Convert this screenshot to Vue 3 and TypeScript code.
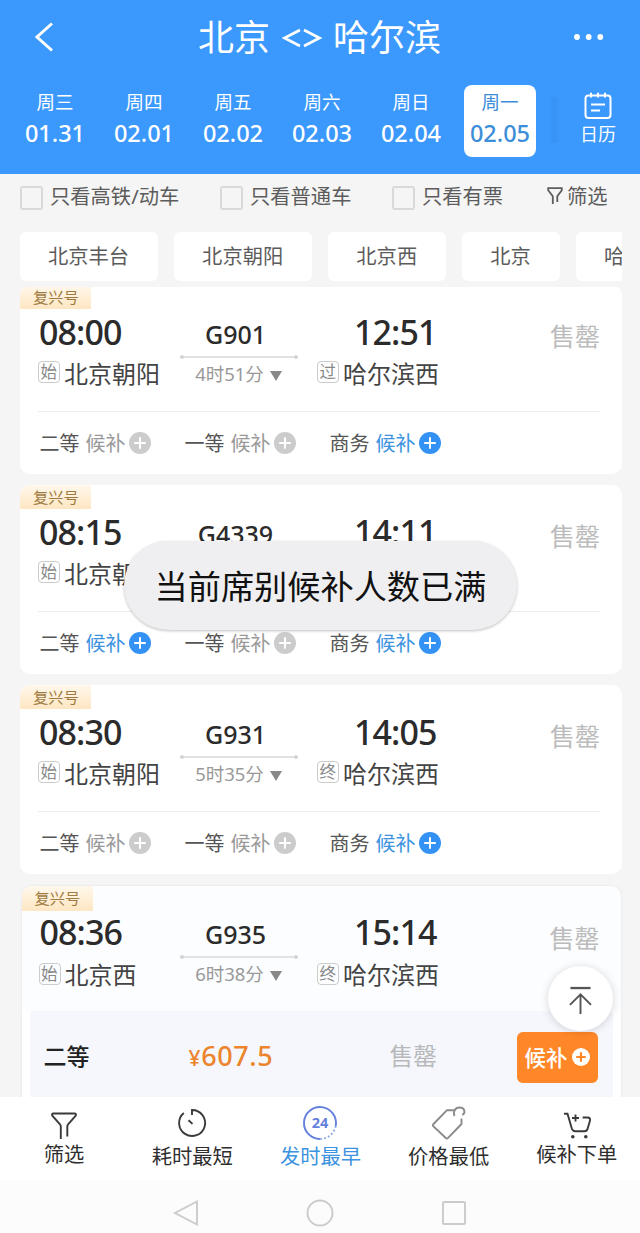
<script setup lang="ts">
interface Seat {
  name: string
  open: boolean
}
interface Train {
  no: string
  depart: string
  arrive: string
  from: string
  to: string
  toKind: string
  duration: string
  seats: Seat[]
  expanded?: boolean
}

const days = [
  { week: '周三', date: '01.31' },
  { week: '周四', date: '02.01' },
  { week: '周五', date: '02.02' },
  { week: '周六', date: '02.03' },
  { week: '周日', date: '02.04' },
  { week: '周一', date: '02.05', active: true },
]

const stations = ['北京丰台', '北京朝阳', '北京西', '北京', '哈尔滨']

const seats = (second: boolean): Seat[] => [
  { name: '二等', open: second },
  { name: '一等', open: false },
  { name: '商务', open: true },
]

const trains: Train[] = [
  { no: 'G901', depart: '08:00', arrive: '12:51', from: '北京朝阳', to: '哈尔滨西', toKind: '过', duration: '4时51分', seats: seats(false) },
  { no: 'G4339', depart: '08:15', arrive: '14:11', from: '北京朝阳', to: '哈尔滨西', toKind: '终', duration: '5时56分', seats: seats(true) },
  { no: 'G931', depart: '08:30', arrive: '14:05', from: '北京朝阳', to: '哈尔滨西', toKind: '终', duration: '5时35分', seats: seats(false) },
  { no: 'G935', depart: '08:36', arrive: '15:14', from: '北京西', to: '哈尔滨西', toKind: '终', duration: '6时38分', seats: [], expanded: true },
]
</script>

<template>
  <div class="screen">
    <header class="header">
      <div class="titlebar">
        <svg class="back" viewBox="0 0 20 30"><path d="M18 1.5 3 15l15 13.5" /></svg>
        <h1 class="title"><span>北京</span><svg class="swap" viewBox="0 0 40 18"><path d="M18 1 2.500 9l15.500 8M22 1l15.500 8L22 17" /></svg><span>哈尔滨</span></h1>
        <svg class="more" viewBox="0 0 30 6"><circle cx="3" cy="3" r="2.900" /><circle cx="14.700" cy="3" r="2.900" /><circle cx="26.300" cy="3" r="2.900" /></svg>
      </div>
      <div class="dates">
        <div v-for="d in days" :key="d.date" class="day" :class="{ active: d.active }">
          <span class="week">{{ d.week }}</span>
          <span class="date">{{ d.date }}</span>
        </div>
        <div class="date-edge"></div>
        <div class="calendar">
          <svg viewBox="0 0 28 28">
            <rect x="1.500" y="3.500" width="25" height="22.500" rx="3" />
            <path d="M7 .8v4.700M14 .8v4.700M21 .8v4.700M7 12.500h14M7 18.500h9" />
          </svg>
          <span>日历</span>
        </div>
      </div>
    </header>

    <main class="content">
      <div class="filters">
        <label class="check first"><i></i>只看高铁/动车</label>
        <label class="check second"><i></i>只看普通车</label>
        <label class="check third"><i></i>只看有票</label>
        <div class="filter">
          <svg viewBox="0 0 16 18"><path d="M5.800 17V9.200L1.200 3.200V1.200h13.600v2l-4.500 6V15" /></svg>
          <span>筛选</span>
        </div>
      </div>

      <div class="chips">
        <span v-for="s in stations" :key="s" class="chip">{{ s }}</span>
      </div>

      <div class="list">
        <article v-for="t in trains" :key="t.no" class="card" :class="{ expanded: t.expanded }">
          <span class="badge">复兴号</span>
          <div class="trip">
            <div class="stop dep">
              <div class="time">{{ t.depart }}</div>
              <div class="place"><i>始</i>{{ t.from }}</div>
            </div>
            <div class="mid">
              <div class="no">{{ t.no }}</div>
              <div class="track"></div>
              <div class="duration">
                <span>{{ t.duration }}</span>
                <svg viewBox="0 0 12 10"><path d="M0 0h12L6 10z" /></svg>
              </div>
            </div>
            <div class="stop arr">
              <div class="time">{{ t.arrive }}</div>
              <div class="place"><i>{{ t.toKind }}</i>{{ t.to }}</div>
            </div>
            <div class="soldout">售罄</div>
          </div>

          <div v-if="!t.expanded" class="seats">
            <div v-for="s in t.seats" :key="s.name" class="seat" :class="{ open: s.open }">
              <span>{{ s.name }}</span>
              <em>候补</em>
              <svg viewBox="0 0 22 22"><circle cx="11" cy="11" r="11" /><path d="M11 5.200v11.600M5.200 11h11.600" /></svg>
            </div>
          </div>
          <div v-else class="panel">
            <span class="class-name">二等</span>
            <span class="price"><small>¥</small>607.5</span>
            <span class="none">售罄</span>
            <button class="wait">
              候补<svg viewBox="0 0 18 18"><circle cx="9" cy="9" r="9" /><path d="M9 4.200v9.600M4.200 9h9.600" /></svg>
            </button>
          </div>
        </article>
      </div>
    </main>

    <nav class="tabs">
      <div class="tab high">
        <svg viewBox="0 0 34 34"><path d="M13.800 33V20.500c0-1-.3-1.500-1-2.300L5.500 10c-1-1.200-.5-2.500 1-2.500h21c1.500 0 2 1.300 1 2.500l-7.200 8.200c-.7.800-1 1.300-1 2.300V30.500" /></svg>
        <span>筛选</span>
      </div>
      <div class="tab">
        <svg viewBox="0 0 34 34"><path d="M17 9V4a13 13 0 1 1-8.200 3M13.500 14.300l4 3.600" /></svg>
        <span>耗时最短</span>
      </div>
      <div class="tab current">
        <svg viewBox="0 0 34 34">
          <path class="c1" d="M17 33A16 16 0 1 1 32.700 20" />
          <path class="c2" d="M32.700 20A16 16 0 0 1 17 33" stroke-dasharray="1.800 2.200" />
          <text x="17" y="22.300" text-anchor="middle">24</text>
        </svg>
        <span>发时最早</span>
      </div>
      <div class="tab tag">
        <svg viewBox="0 0 34 34"><path d="M23 4.200H15L1.500 18c-.8.800-.8 1.500 0 2.300l12 11.500c1 .9 1.700.9 2.600 0L29.500 18v-5.500M22.500 10c-1.800-4 .5-8.500 5-8.500 5.500 0 6.300 5.500 2.800 7.300" /></svg>
        <span>价格最低</span>
      </div>
      <div class="tab high">
        <svg viewBox="0 0 34 34"><path d="M4 7.800h3.500l4.300 14.700c.7 2 1.600 2.700 3.500 2.700h9.200c1.800 0 2.600-.8 3.100-2.500l2.300-7.700c.7-2.300-.3-3.500-2.300-3.500h-5M15.500 8.500v7M12 12h7" /><circle cx="12.800" cy="30.800" r="1.800" /><circle cx="25.800" cy="30.800" r="1.800" /></svg>
        <span>候补下单</span>
      </div>
    </nav>

    <div class="sysnav">
      <svg viewBox="0 0 28 28"><path d="M24 2.500v23L2 14z" /></svg>
      <svg viewBox="0 0 28 28"><circle cx="14" cy="14" r="12.500" /></svg>
      <svg viewBox="0 0 28 28"><rect x="3" y="3" width="22" height="22" rx="1" /></svg>
    </div>

    <button class="totop">
      <svg viewBox="0 0 24 30"><path d="M1.500 2h21" stroke-width="2.400" /><path d="M12 29V8.500M1 19.500l11-11 11 11" /></svg>
    </button>
    <div class="toast">当前席别候补人数已满</div>
  </div>
</template>

<style>
body {
  margin: 0;
  overflow: hidden;
}
</style>

<style scoped>
.screen {
  position: relative;
  display: flex;
  flex-direction: column;
  width: 640px;
  height: 1233px;
  overflow: hidden;
  background: #f5f5f5;
  color: #333;
  font-family: 'Noto Sans', 'Noto Sans CJK SC', sans-serif;
  white-space: nowrap;
}
* {
  box-sizing: border-box;
}
svg {
  flex: none;
  fill: none;
  overflow: visible;
}
i,
em {
  font-style: normal;
}
button {
  border: 0;
  padding: 0;
  font-family: inherit;
}

.header {
  flex: none;
  height: 174px;
  background: #3b98fc;
  color: #fff;
}
.titlebar {
  display: flex;
  align-items: center;
  height: 74px;
  padding: 0 36px 0 34px;
}
.back {
  width: 20px;
  height: 30px;
  stroke: #fff;
  stroke-width: 3;
}
.title {
  display: flex;
  align-items: center;
  flex: 1;
  margin: 0 0 0 144px;
  font-size: 36px;
  font-weight: 400;
  line-height: 75px;
}
.swap {
  width: 40px;
  height: 18px;
  margin: 1px 11px 0 12px;
  stroke: #fff;
  stroke-width: 2.700;
}
.more {
  width: 30px;
  height: 6px;
  fill: #fff;
}
.dates {
  display: flex;
  padding: 11px 0 0 19px;
}
.day {
  display: flex;
  flex-direction: column;
  align-items: center;
  width: 72px;
  height: 72px;
  margin-right: 17px;
  border-radius: 8px;
}
.day.active {
  background: #fff;
  color: #3c8ed8;
}
.week {
  margin-top: 5px;
  font-size: 18.500px;
  line-height: 24px;
}
.date {
  margin-top: 6px;
  font-size: 23.500px;
  font-weight: 500;
  line-height: 27px;
}
.date-edge {
  width: 10px;
  height: 46px;
  margin: 12px 24px 0 -4px;
  background: linear-gradient(90deg, rgba(30, 110, 210, 0), rgba(30, 110, 210, 0.14), rgba(30, 110, 210, 0));
}
.calendar {
  display: flex;
  flex-direction: column;
  align-items: center;
  width: 40px;
  margin-left: -5px;
  padding-top: 7px;
  font-size: 18px;
  line-height: 24px;
}
.calendar svg {
  width: 28px;
  height: 28px;
  margin-bottom: 2px;
  stroke: #fff;
  stroke-width: 2;
}

.content {
  flex: 1;
  min-height: 0;
  overflow: hidden;
}
.filters {
  display: flex;
  height: 58px;
  padding: 8px 0 0 20px;
  font-size: 20.300px;
  line-height: 28px;
  color: #5c5c5c;
}
.check {
  display: flex;
}
.check i {
  width: 23px;
  height: 24px;
  margin: 4px 7px 0 0;
  border: 2px solid #d9d9d9;
  border-radius: 3px;
}
.check.first {
  width: 200px;
}
.check.second {
  width: 172px;
}
.check.third {
  width: 155px;
}
.filter {
  display: flex;
}
.filter svg {
  width: 16px;
  height: 18px;
  margin: 5px 4px 0 0;
  stroke: #5c5c5c;
  stroke-width: 1.800;
}
.chips {
  display: flex;
  gap: 16.500px;
  width: 602px;
  height: 49px;
  margin-left: 20px;
  overflow: hidden;
}
.chip {
  flex: none;
  padding: 0 28.700px 0 27.900px;
  border-radius: 6px;
  background: #fff;
  font-size: 20.300px;
  line-height: 48px;
  color: #5c5c5c;
}

.list {
  display: flex;
  flex-direction: column;
  gap: 11px;
  height: 816px;
  margin-top: 6px;
  overflow: hidden;
}
.card {
  flex: none;
  display: flex;
  flex-direction: column;
  width: 602px;
  height: 189px;
  margin-left: 20px;
  border-radius: 10px;
  background: #fff;
  overflow: hidden;
}
.card:first-child {
  margin-top: -2px;
}
.badge {
  flex: none;
  align-self: flex-start;
  width: 71px;
  height: 24px;
  padding-left: 13px;
  background: linear-gradient(#fff8ec, #fee6c2);
  font-size: 15.300px;
  line-height: 24px;
  color: #a07c42;
}
.trip {
  display: flex;
  flex: none;
  height: 102px;
  padding: 2px 22px 0 18px;
}
.stop {
  width: 142px;
}
.arr {
  margin-left: 19px;
}
.time {
  height: 40px;
  padding-left: 1px;
  font-size: 34px;
  font-weight: 500;
  line-height: 42px;
  letter-spacing: -0.900px;
  color: #2b2b2b;
}
.arr .time {
  padding-left: 37px;
}
.place {
  display: flex;
  align-items: center;
  height: 42px;
  font-size: 24px;
  color: #444;
}
.place i {
  width: 22px;
  height: 22px;
  margin-right: 4px;
  border: 1.500px solid #ccc;
  border-radius: 4px;
  font-size: 16.500px;
  line-height: 20px;
  text-align: center;
  text-indent: -0.500px;
  color: #888;
}
.mid {
  width: 118px;
}
.no {
  margin-right: 7px;
  padding-top: 6px;
  font-size: 25px;
  font-weight: 500;
  line-height: 34px;
  text-align: center;
  color: #2b2b2b;
}
.track {
  display: flex;
  align-items: center;
  justify-content: space-between;
  height: 1.500px;
  margin: 5px 0 4.500px;
  background: #e2e2e2;
}
.track::before,
.track::after {
  content: '';
  width: 4px;
  height: 4px;
  border-radius: 2px;
  background: #d4d4d4;
}
.duration {
  display: flex;
  align-items: center;
  justify-content: center;
  gap: 6px;
  margin-right: 1px;
  font-size: 18.500px;
  line-height: 24px;
  color: #999;
}
.duration svg {
  width: 12px;
  height: 10px;
  margin-top: 3px;
  fill: #888;
}
.soldout {
  margin-left: auto;
  font-size: 25px;
  line-height: 51px;
  color: #bbb;
}
.seats {
  display: flex;
  flex: 1;
  margin: 0 22px 0 18px;
  border-top: 1.500px solid #ededed;
}
.seat {
  display: flex;
  align-items: center;
  width: 145px;
  height: 61px;
  padding-left: 1.500px;
  font-size: 20px;
  color: #555;
}
.seat em {
  margin: 0 3px 0 6px;
  color: #999;
}
.seat svg {
  width: 22px;
  height: 22px;
}
.seat circle {
  fill: #ccc;
}
.seat path {
  stroke: #fff;
  stroke-width: 2;
}
.seat.open em {
  color: #3c93e0;
}
.seat.open circle {
  fill: #3592f5;
}

.card.expanded {
  width: 599px;
  height: 230px;
  margin: 1px 0 0 21.500px;
  background: linear-gradient(#fcfdff 0 125px, #fff 125px);
  box-shadow: 0 0 3px rgba(0, 0, 0, 0.08);
}
.expanded .badge {
  height: 25px;
  line-height: 25px;
}
.expanded .trip {
  height: 100px;
  padding: 0 21px 0 17px;
}
.expanded .stop.dep {
  width: 141.500px;
}
.expanded .place {
  height: 45px;
}
.expanded .soldout {
  line-height: 54px;
}
.panel {
  display: flex;
  align-items: flex-start;
  flex: 1;
  margin: 0 8px;
  padding: 21px 15px 0 14px;
  border-radius: 4px;
  background: #f5f7fc;
  line-height: 48px;
}
.class-name {
  width: 145px;
  font-size: 23px;
  font-weight: 500;
  color: #222;
}
.price {
  width: 201px;
  font-size: 27px;
  font-weight: 500;
  letter-spacing: 0.600px;
  color: #ec842e;
}
.price small {
  font-size: 21px;
}
.none {
  font-size: 23.700px;
  color: #b8b8ba;
}
.wait {
  display: flex;
  align-items: center;
  justify-content: center;
  gap: 4px;
  width: 81px;
  height: 51px;
  margin-left: auto;
  padding-bottom: 2px;
  border-radius: 6px;
  background: #ff8727;
  color: #fff;
  font-size: 21.500px;
  font-weight: 500;
}
.wait svg {
  width: 18px;
  height: 18px;
  fill: #fff;
}
.wait path {
  stroke: #ff8727;
  stroke-width: 2.200;
}

.tabs {
  flex: none;
  display: flex;
  height: 83px;
  background: #fff;
}
.tab {
  display: flex;
  flex-direction: column;
  align-items: center;
  flex: none;
  width: 128.200px;
  padding-top: 9px;
  font-size: 20.300px;
  line-height: 28px;
  color: #2e2e2e;
}
.tab svg {
  width: 34px;
  height: 34px;
  margin-bottom: 2px;
  stroke: #3a3a3a;
  stroke-width: 1.900;
}
.tab.high svg {
  margin-bottom: 0;
}
.tab.high circle {
  fill: #3a3a3a;
  stroke: none;
}
.tab.tag svg {
  stroke: #8a8a8a;
}
.tab.current {
  color: #3c93e0;
}
.current .c1 {
  stroke: #6480dc;
}
.current .c2 {
  stroke: #8ea3e6;
}
.current text {
  fill: #6480dc;
  stroke: none;
  font-size: 14.500px;
  font-weight: 700;
}

.sysnav {
  flex: none;
  display: flex;
  align-items: center;
  justify-content: center;
  gap: 105.500px;
  height: 53px;
  padding-top: 12px;
  background: #fcfcfc;
}
.sysnav svg {
  width: 28px;
  height: 28px;
  stroke: #cbcbcb;
  stroke-width: 1.900;
}

.totop {
  position: absolute;
  left: 548px;
  top: 966px;
  display: flex;
  align-items: center;
  justify-content: center;
  width: 65px;
  height: 65px;
  border-radius: 50%;
  background: #fff;
  box-shadow: 0 1px 8px rgba(0, 0, 0, 0.16);
}
.totop svg {
  width: 23px;
  height: 29px;
  margin-top: 3px;
  stroke: #555;
  stroke-width: 2;
}
.toast {
  position: absolute;
  left: 124px;
  top: 541px;
  width: 393px;
  height: 89px;
  border-radius: 45px;
  background: #efeff1;
  box-shadow: 0 1px 3px rgba(0, 0, 0, 0.25);
  font-size: 33.200px;
  line-height: 91px;
  text-align: center;
  color: #111;
}
</style>
